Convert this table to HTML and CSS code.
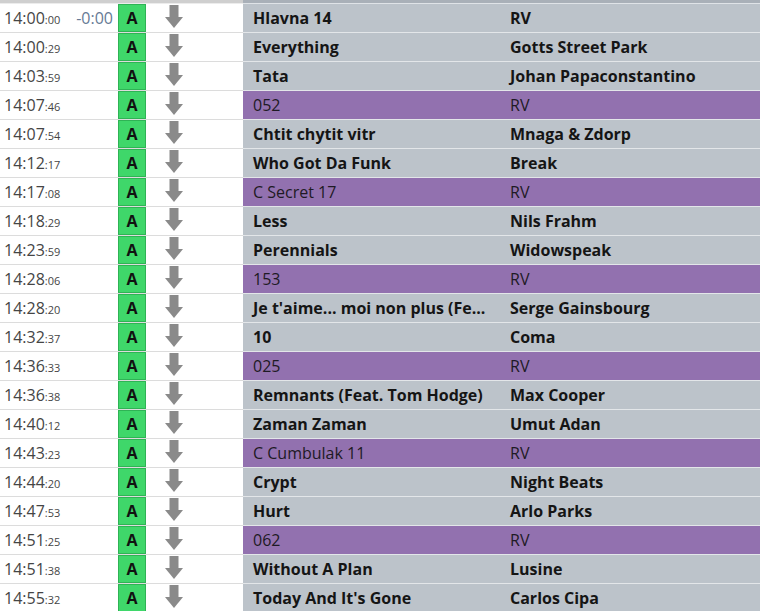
FILE: index.html
```html
<!DOCTYPE html>
<html>
<head>
<meta charset="utf-8">
<link rel="stylesheet" href="styles.css">
</head>
<body>
<div class="list">
  <div class="topbar"><div class="tb-left"></div><div class="tb-right"></div></div>

  <div class="row"><div class="time"><span class="t">14:00<small>:00</small></span><span class="delta">-0:00</span></div><div class="src"><span class="badge">A</span></div><div class="act"><svg class="arrow" viewBox="0 0 18 24"><rect x="4.5" y="0" width="9" height="13"/><polygon points="0,12 18,12 9,23"/></svg></div><div class="title">Hlavna 14</div><div class="artist">RV</div></div>

  <div class="row"><div class="time"><span class="t">14:00<small>:29</small></span></div><div class="src"><span class="badge">A</span></div><div class="act"><svg class="arrow" viewBox="0 0 18 24"><rect x="4.5" y="0" width="9" height="13"/><polygon points="0,12 18,12 9,23"/></svg></div><div class="title">Everything</div><div class="artist">Gotts Street Park</div></div>

  <div class="row"><div class="time"><span class="t">14:03<small>:59</small></span></div><div class="src"><span class="badge">A</span></div><div class="act"><svg class="arrow" viewBox="0 0 18 24"><rect x="4.5" y="0" width="9" height="13"/><polygon points="0,12 18,12 9,23"/></svg></div><div class="title">Tata</div><div class="artist">Johan Papaconstantino</div></div>

  <div class="row jingle"><div class="time"><span class="t">14:07<small>:46</small></span></div><div class="src"><span class="badge">A</span></div><div class="act"><svg class="arrow" viewBox="0 0 18 24"><rect x="4.5" y="0" width="9" height="13"/><polygon points="0,12 18,12 9,23"/></svg></div><div class="title">052</div><div class="artist">RV</div></div>

  <div class="row"><div class="time"><span class="t">14:07<small>:54</small></span></div><div class="src"><span class="badge">A</span></div><div class="act"><svg class="arrow" viewBox="0 0 18 24"><rect x="4.5" y="0" width="9" height="13"/><polygon points="0,12 18,12 9,23"/></svg></div><div class="title">Chtit chytit vitr</div><div class="artist">Mnaga &amp; Zdorp</div></div>

  <div class="row"><div class="time"><span class="t">14:12<small>:17</small></span></div><div class="src"><span class="badge">A</span></div><div class="act"><svg class="arrow" viewBox="0 0 18 24"><rect x="4.5" y="0" width="9" height="13"/><polygon points="0,12 18,12 9,23"/></svg></div><div class="title">Who Got Da Funk</div><div class="artist">Break</div></div>

  <div class="row jingle"><div class="time"><span class="t">14:17<small>:08</small></span></div><div class="src"><span class="badge">A</span></div><div class="act"><svg class="arrow" viewBox="0 0 18 24"><rect x="4.5" y="0" width="9" height="13"/><polygon points="0,12 18,12 9,23"/></svg></div><div class="title">C Secret 17</div><div class="artist">RV</div></div>

  <div class="row"><div class="time"><span class="t">14:18<small>:29</small></span></div><div class="src"><span class="badge">A</span></div><div class="act"><svg class="arrow" viewBox="0 0 18 24"><rect x="4.5" y="0" width="9" height="13"/><polygon points="0,12 18,12 9,23"/></svg></div><div class="title">Less</div><div class="artist">Nils Frahm</div></div>

  <div class="row"><div class="time"><span class="t">14:23<small>:59</small></span></div><div class="src"><span class="badge">A</span></div><div class="act"><svg class="arrow" viewBox="0 0 18 24"><rect x="4.5" y="0" width="9" height="13"/><polygon points="0,12 18,12 9,23"/></svg></div><div class="title">Perennials</div><div class="artist">Widowspeak</div></div>

  <div class="row jingle"><div class="time"><span class="t">14:28<small>:06</small></span></div><div class="src"><span class="badge">A</span></div><div class="act"><svg class="arrow" viewBox="0 0 18 24"><rect x="4.5" y="0" width="9" height="13"/><polygon points="0,12 18,12 9,23"/></svg></div><div class="title">153</div><div class="artist">RV</div></div>

  <div class="row"><div class="time"><span class="t">14:28<small>:20</small></span></div><div class="src"><span class="badge">A</span></div><div class="act"><svg class="arrow" viewBox="0 0 18 24"><rect x="4.5" y="0" width="9" height="13"/><polygon points="0,12 18,12 9,23"/></svg></div><div class="title">Je t'aime... moi non plus (Fe...</div><div class="artist">Serge Gainsbourg</div></div>

  <div class="row"><div class="time"><span class="t">14:32<small>:37</small></span></div><div class="src"><span class="badge">A</span></div><div class="act"><svg class="arrow" viewBox="0 0 18 24"><rect x="4.5" y="0" width="9" height="13"/><polygon points="0,12 18,12 9,23"/></svg></div><div class="title">10</div><div class="artist">Coma</div></div>

  <div class="row jingle"><div class="time"><span class="t">14:36<small>:33</small></span></div><div class="src"><span class="badge">A</span></div><div class="act"><svg class="arrow" viewBox="0 0 18 24"><rect x="4.5" y="0" width="9" height="13"/><polygon points="0,12 18,12 9,23"/></svg></div><div class="title">025</div><div class="artist">RV</div></div>

  <div class="row"><div class="time"><span class="t">14:36<small>:38</small></span></div><div class="src"><span class="badge">A</span></div><div class="act"><svg class="arrow" viewBox="0 0 18 24"><rect x="4.5" y="0" width="9" height="13"/><polygon points="0,12 18,12 9,23"/></svg></div><div class="title">Remnants (Feat. Tom Hodge)</div><div class="artist">Max Cooper</div></div>

  <div class="row"><div class="time"><span class="t">14:40<small>:12</small></span></div><div class="src"><span class="badge">A</span></div><div class="act"><svg class="arrow" viewBox="0 0 18 24"><rect x="4.5" y="0" width="9" height="13"/><polygon points="0,12 18,12 9,23"/></svg></div><div class="title">Zaman Zaman</div><div class="artist">Umut Adan</div></div>

  <div class="row jingle"><div class="time"><span class="t">14:43<small>:23</small></span></div><div class="src"><span class="badge">A</span></div><div class="act"><svg class="arrow" viewBox="0 0 18 24"><rect x="4.5" y="0" width="9" height="13"/><polygon points="0,12 18,12 9,23"/></svg></div><div class="title">C Cumbulak 11</div><div class="artist">RV</div></div>

  <div class="row"><div class="time"><span class="t">14:44<small>:20</small></span></div><div class="src"><span class="badge">A</span></div><div class="act"><svg class="arrow" viewBox="0 0 18 24"><rect x="4.5" y="0" width="9" height="13"/><polygon points="0,12 18,12 9,23"/></svg></div><div class="title">Crypt</div><div class="artist">Night Beats</div></div>

  <div class="row"><div class="time"><span class="t">14:47<small>:53</small></span></div><div class="src"><span class="badge">A</span></div><div class="act"><svg class="arrow" viewBox="0 0 18 24"><rect x="4.5" y="0" width="9" height="13"/><polygon points="0,12 18,12 9,23"/></svg></div><div class="title">Hurt</div><div class="artist">Arlo Parks</div></div>

  <div class="row jingle"><div class="time"><span class="t">14:51<small>:25</small></span></div><div class="src"><span class="badge">A</span></div><div class="act"><svg class="arrow" viewBox="0 0 18 24"><rect x="4.5" y="0" width="9" height="13"/><polygon points="0,12 18,12 9,23"/></svg></div><div class="title">062</div><div class="artist">RV</div></div>

  <div class="row"><div class="time"><span class="t">14:51<small>:38</small></span></div><div class="src"><span class="badge">A</span></div><div class="act"><svg class="arrow" viewBox="0 0 18 24"><rect x="4.5" y="0" width="9" height="13"/><polygon points="0,12 18,12 9,23"/></svg></div><div class="title">Without A Plan</div><div class="artist">Lusine</div></div>

  <div class="row"><div class="time"><span class="t">14:55<small>:32</small></span></div><div class="src"><span class="badge">A</span></div><div class="act"><svg class="arrow" viewBox="0 0 18 24"><rect x="4.5" y="0" width="9" height="13"/><polygon points="0,12 18,12 9,23"/></svg></div><div class="title">Today And It's Gone</div><div class="artist">Carlos Cipa</div></div>
</div>
</body>
</html>
```
FILE: styles.css
```css
html, body {
  margin: 0;
  padding: 0;
  background: #ffffff;
  overflow: hidden;
}
body {
  width: 760px;
  height: 611px;
  font-family: "Open Sans", "Noto Sans", sans-serif;
}
.list {
  display: flex;
  flex-direction: column;
}
.topbar {
  display: grid;
  grid-template-columns: 243px 1fr;
  height: 4px;
}
.tb-left {
  background: #cfcfcf;
  border-bottom: 1px solid #ececec;
}
.tb-right {
  background: #a9b0b8;
  border-bottom: 1px solid #dfe3e7;
}
.row {
  display: grid;
  grid-template-columns: 118px 28px 97px 257px 1fr;
  height: 29px;
}
.row > div {
  box-sizing: border-box;
  height: 29px;
  border-bottom: 1px solid #dcdcdc;
  display: flex;
  align-items: center;
}
.time {
  justify-content: space-between;
  padding: 0 5px 0 4px;
  color: #454545;
  font-size: 16px;
  white-space: nowrap;
}
.time small {
  font-size: 11px;
}
.delta {
  color: #667a95;
}
.badge {
  box-sizing: border-box;
  width: 28px;
  height: 28px;
  background: #3fd76a;
  border: 1px solid #2fb355;
  display: flex;
  align-items: center;
  justify-content: center;
  font-weight: 700;
  font-size: 16px;
  color: #111;
}
.act {
  padding-left: 19px;
  align-items: flex-start !important;
}
.arrow {
  width: 18px;
  height: 24px;
  fill: #8a8a8a;
  margin-top: 1px;
}
.title, .artist {
  background: #bcc3ca;
  border-bottom-color: #e3e6e9 !important;
  font-weight: 700;
  font-size: 16px;
  color: #151515;
  white-space: nowrap;
  overflow: hidden;
}
.title {
  padding-left: 10px;
}
.artist {
  padding-left: 10px;
}
.jingle .title, .jingle .artist {
  background: #9271af;
  font-weight: 400;
  color: #1e1a24;
}
```
